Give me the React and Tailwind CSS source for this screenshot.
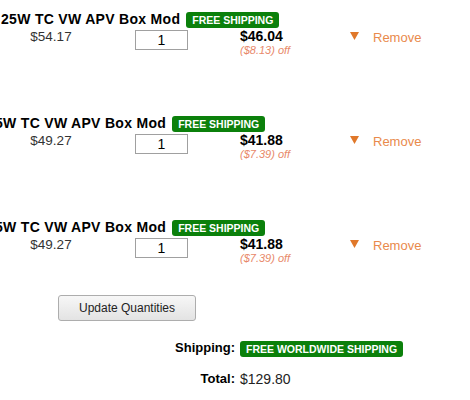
import React from 'react'

const ITEMS = [
  { title: '25W TC VW APV Box Mod', shift: 'ml-[1px]', price: '$54.17', sale: '$46.04', off: '($8.13) off' },
  { title: '5W TC VW APV Box Mod', shift: '-ml-[5px]', price: '$49.27', sale: '$41.88', off: '($7.39) off' },
  { title: '5W TC VW APV Box Mod', shift: '-ml-[5px]', price: '$49.27', sale: '$41.88', off: '($7.39) off' },
]

function Badge({ children }) {
  return (
    <span className="inline-flex items-center h-[16px] px-[6px] rounded-[3px] bg-[#0b800b] text-white text-[10.5px] font-bold leading-none whitespace-nowrap">
      {children}
    </span>
  )
}

function CartRow({ item, last }) {
  return (
    <div className={last ? 'pt-[9px]' : 'h-[104px] pt-[9px]'}>
      {/* title + shipping badge */}
      <div className="flex items-center h-[19px] whitespace-nowrap">
        <span className={`${item.shift} text-[14px] font-bold tracking-[0.3px] text-black leading-4`}>{item.title}</span>
        <span className="ml-[6px]"><Badge>FREE SHIPPING</Badge></span>
      </div>

      {/* price / qty / total / remove */}
      <div className="flex items-start">
        <div className="w-[102px] pt-[1px] text-center text-[13.5px] leading-4 text-[#333]">{item.price}</div>
        <div className="w-[138px] pl-[33px] pt-[2px]">
          <input
            readOnly
            value="1"
            className="block w-[53px] h-[20px] border border-[#a0a0a0] bg-white text-center text-[14px] text-black outline-none"
          />
        </div>
        <div className="w-[110px]">
          <div className="text-[14px] font-bold leading-4 text-black">{item.sale}</div>
          <div className="text-[11px] italic leading-[13px] text-[#e8896a]">{item.off}</div>
        </div>
        <svg className="mt-[4px]" width="9" height="8" viewBox="0 0 9 8">
          <path d="M0 0 L9 0 L4.5 8 Z" fill="#e0782a" />
        </svg>
        <span className="ml-[14px] mt-[2px] text-[13px] leading-4 text-[#e98a4c]">Remove</span>
      </div>
    </div>
  )
}

export default function App() {
  return (
    <div
      className="w-[470px] h-[400px] overflow-hidden bg-white text-black"
      style={{ fontFamily: '"Liberation Sans", Arial, sans-serif' }}
    >
      {ITEMS.map((item, i) => (
        <CartRow key={i} item={item} last={i === ITEMS.length - 1} />
      ))}

      <div className="mt-[30px] pl-[58px]">
        <button className="w-[138px] h-[26px] rounded-[3px] border border-[#adadad] bg-gradient-to-b from-[#f7f7f7] to-[#e3e3e3] text-[12px] text-[#222]">
          Update Quantities
        </button>
      </div>

      <div className="mt-[15px] grid grid-cols-[235px_1fr] gap-x-[5px] gap-y-[11px] items-center">
        <div className="text-right text-[13px] font-bold leading-4">Shipping:</div>
        <div><Badge>FREE WORLDWIDE SHIPPING</Badge></div>
        <div className="text-right text-[13px] font-bold leading-4">Total:</div>
        <div className="text-[14px] leading-4 text-[#222]">$129.80</div>
      </div>
    </div>
  )
}
